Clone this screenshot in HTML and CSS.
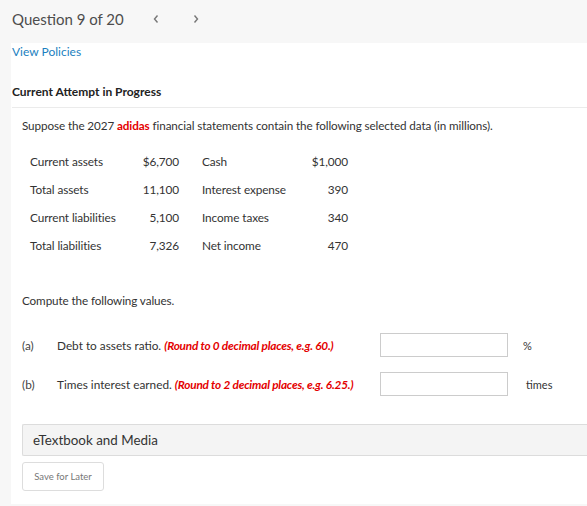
FILE: index.html
```html
<!DOCTYPE html>
<html>
<head>
<meta charset="utf-8">
<link rel="stylesheet" href="styles.css">
</head>
<body>
<div class="header">
  <span class="qtitle">Question 9 of 20</span>
  <span class="nav">
    <svg width="8" height="10" viewBox="0 0 8 10"><path d="M5.5 1.5 L2.5 5 L5.5 8.5" fill="none" stroke="#777" stroke-width="1.4"/></svg>
    <svg width="8" height="10" viewBox="0 0 8 10"><path d="M2.5 1.5 L5.5 5 L2.5 8.5" fill="none" stroke="#777" stroke-width="1.4"/></svg>
  </span>
</div>
<div class="main">
  <a class="policies">View Policies</a>
  <div class="attempt">Current Attempt in Progress</div>
  <div class="question">
    <p class="intro">Suppose the 2027 <span class="red">adidas</span> financial statements contain the following selected data (in millions).</p>
    <div class="data">
      <span>Current assets</span><span class="num">$6,700</span><span>Cash</span><span class="num">$1,000</span>
      <span>Total assets</span><span class="num">11,100</span><span>Interest expense</span><span class="num">390</span>
      <span>Current liabilities</span><span class="num">5,100</span><span>Income taxes</span><span class="num">340</span>
      <span>Total liabilities</span><span class="num">7,326</span><span>Net income</span><span class="num">470</span>
    </div>
    <p class="compute">Compute the following values.</p>
    <div class="parts">
      <span class="lbl">(a)</span>
      <span class="txt">Debt to assets ratio. <em>(Round to 0 decimal places, e.g. 60.)</em></span>
      <span class="box"></span>
      <span class="unit pct">%</span>
      <span class="lbl">(b)</span>
      <span class="txt">Times interest earned. <em>(Round to 2 decimal places, e.g. 6.25.)</em></span>
      <span class="box"></span>
      <span class="unit">times</span>
    </div>
    <div class="etext">eTextbook and Media</div>
    <button class="save">Save for Later</button>
  </div>
</div>
</body>
</html>
```
FILE: styles.css
```css
html, body {
  margin: 0;
  padding: 0;
  background: #f7f7f7;
  font-family: Lato, "Open Sans", sans-serif;
  color: #333;
}
body {
  width: 587px;
  height: 506px;
  overflow: hidden;
}
.header {
  height: 43px;
  display: flex;
  align-items: center;
  padding-left: 12px;
  padding-bottom: 6px;
  box-sizing: border-box;
}
.qtitle {
  font-size: 15px;
  color: #4d4d4d;
}
.nav {
  display: flex;
  gap: 32px;
  margin-left: 28px;
  margin-top: 1px;
}
.main {
  background: #fff;
  margin-left: 11px;
  height: 461px;
  padding-top: 1px;
  box-sizing: border-box;
}
.policies {
  display: block;
  color: #1b7fc0;
  font-size: 12px;
  margin-left: 1px;
  line-height: 14px;
  margin-top: 1px;
}
.attempt {
  font-weight: bold;
  font-size: 12px;
  color: #222;
  margin-left: 1px;
  margin-top: 25px;
  padding-bottom: 8px;
  border-bottom: 1px solid #ebebeb;
  line-height: 15px;
}
.question {
  padding-left: 11px;
}
.intro {
  font-size: 11.7px;
  margin: 10px 0 0;
  line-height: 14px;
  color: #333;
  letter-spacing: -0.1px;
}
.red { color: #e40000; font-weight: bold; }
.data {
  display: grid;
  grid-template-columns: 100px 49px 23px 100px 46px;
  grid-auto-rows: 28px;
  margin: 15px 0 0 8px;
  font-size: 11.8px;
  letter-spacing: -0.1px;
  align-items: center;
  color: #333;
}
.data span:nth-child(4n+3) { grid-column: 4; }
.num { text-align: right; }
.compute {
  font-size: 11.7px;
  margin: 34px 0 0;
  line-height: 14px;
  letter-spacing: -0.1px;
}
.parts {
  display: grid;
  grid-template-columns: 35px 323px 128px 1fr;
  grid-auto-rows: 24px;
  row-gap: 15px;
  margin-top: 26px;
  align-items: center;
  font-size: 11.8px;
}
.lbl { color: #444; }
.txt em {
  color: #e40000;
  font-weight: bold;
  font-style: italic;
  letter-spacing: -0.2px;
}
.box {
  height: 24px;
  border: 1px solid #ccc;
  box-sizing: border-box;
}
.unit { padding-left: 18px; font-size: 11px; }
.pct { padding-left: 15px; }
.etext {
  margin-top: 28px;
  height: 32px;
  background: #f4f4f4;
  border: 1px solid #dcdcdc;
  border-right: none;
  border-radius: 2px 0 0 2px;
  box-sizing: border-box;
  display: flex;
  align-items: center;
  padding-left: 10px;
  font-size: 13.4px;
  color: #333;
}
.save {
  margin-top: 6px;
  width: 82px;
  height: 29px;
  background: #fff;
  border: 1px solid #ddd;
  border-radius: 3px;
  font-family: Lato, sans-serif;
  font-size: 9.5px;
  color: #777;
  padding: 0;
}
```
